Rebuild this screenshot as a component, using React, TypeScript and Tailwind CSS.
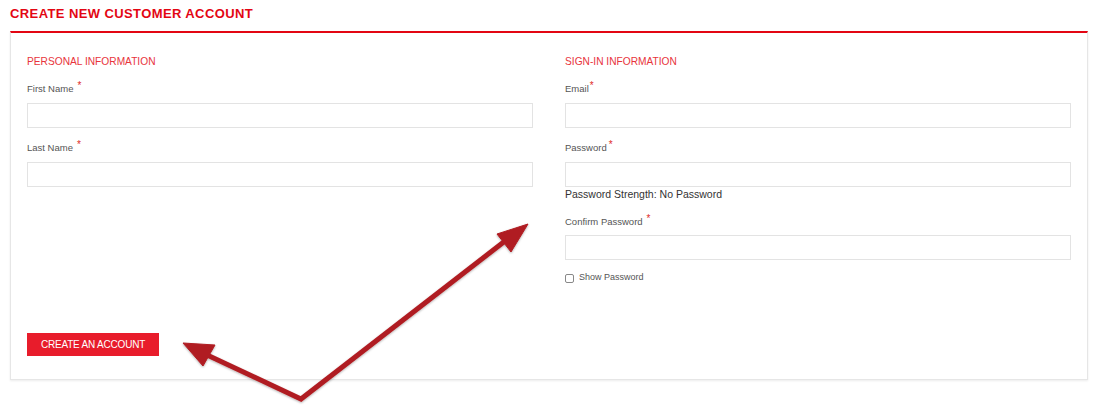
const font = { fontFamily: '"Liberation Sans", Arial, sans-serif' };

function Label({ text, gap = "ml-[5px]" }: { text: string; gap?: string }) {
  return (
    <div className="h-[14px] flex items-center text-[9.5px] leading-[14px] text-[#555]">
      {text}
      <span className={`${gap} -mt-[6px] text-[10px] text-[#e02b27]`}>*</span>
    </div>
  );
}

function Input() {
  return <div className="h-[25px] border border-[#e3e3e3] bg-white" />;
}

function Arrows() {
  return (
    <svg className="absolute left-0 top-0 pointer-events-none" width="1100" height="418">
      <defs>
        <filter id="sh" x="-10%" y="-10%" width="120%" height="120%">
          <feDropShadow dx="0" dy="1" stdDeviation="0.8" floodColor="#000" floodOpacity="0.3" />
        </filter>
      </defs>
      <g filter="url(#sh)" fill="#b01e23" stroke="#b01e23">
        <polyline points="205,354 301,399 505,241" fill="none" strokeWidth="5" strokeLinejoin="miter" />
        <polygon points="183,343 215,345 203,366" strokeWidth="1" />
        <polygon points="528,224 511,252 497,234" strokeWidth="1" />
      </g>
    </svg>
  );
}

export default function App() {
  return (
    <div className="relative w-[1100px] h-[418px] bg-white" style={font}>
      <div className="pl-[10px] w-[1088px]">
        <div className="h-[31px] pt-[7px] text-[13px] leading-[14px] font-bold tracking-[0.4px] text-[#e30613]">
          CREATE NEW CUSTOMER ACCOUNT
        </div>
        <div className="border border-[#e6e6e6] border-t-2 border-t-[#e30613] shadow-[0_1px_2px_rgba(0,0,0,0.08)] px-4 pt-[22px] pb-[23px]">
          <div className="grid grid-cols-2 gap-8">
            <div>
              <div className="h-[14px] text-[10.2px] leading-[14px] text-[#e8343c] mb-[13px]">PERSONAL INFORMATION</div>
              <Label text="First Name" gap="ml-[4px]" />
              <div className="mt-[7px]"><Input /></div>
              <div className="mt-[13px]"><Label text="Last Name" gap="ml-[4px]" /></div>
              <div className="mt-[7px]"><Input /></div>
            </div>
            <div>
              <div className="h-[14px] text-[10.2px] leading-[14px] text-[#e8343c] mb-[13px]">SIGN-IN INFORMATION</div>
              <Label text="Email" gap="ml-[1px]" />
              <div className="mt-[7px]"><Input /></div>
              <div className="mt-[13px]"><Label text="Password" gap="ml-[2px]" /></div>
              <div className="mt-[7px]"><Input /></div>
              <div className="h-[14px] text-[10.5px] leading-[14px] text-[#333]">Password Strength: No Password</div>
              <div className="mt-[14px]"><Label text="Confirm Password" gap="ml-[4px]" /></div>
              <div className="mt-[6px]"><Input /></div>
              <div className="mt-[12px] flex items-center gap-[5px] h-[12px]">
                <div className="w-[9px] h-[9px] border border-[#888] rounded-[2px] bg-white" />
                <span className="text-[9px] text-[#555]">Show Password</span>
              </div>
            </div>
          </div>
          <div className="mt-[47px]">
            <button className="h-[23px] w-[132px] bg-[#e81c2b] text-white text-[10px] tracking-[-0.2px]">
              CREATE AN ACCOUNT
            </button>
          </div>
        </div>
      </div>
      <Arrows />
    </div>
  );
}
